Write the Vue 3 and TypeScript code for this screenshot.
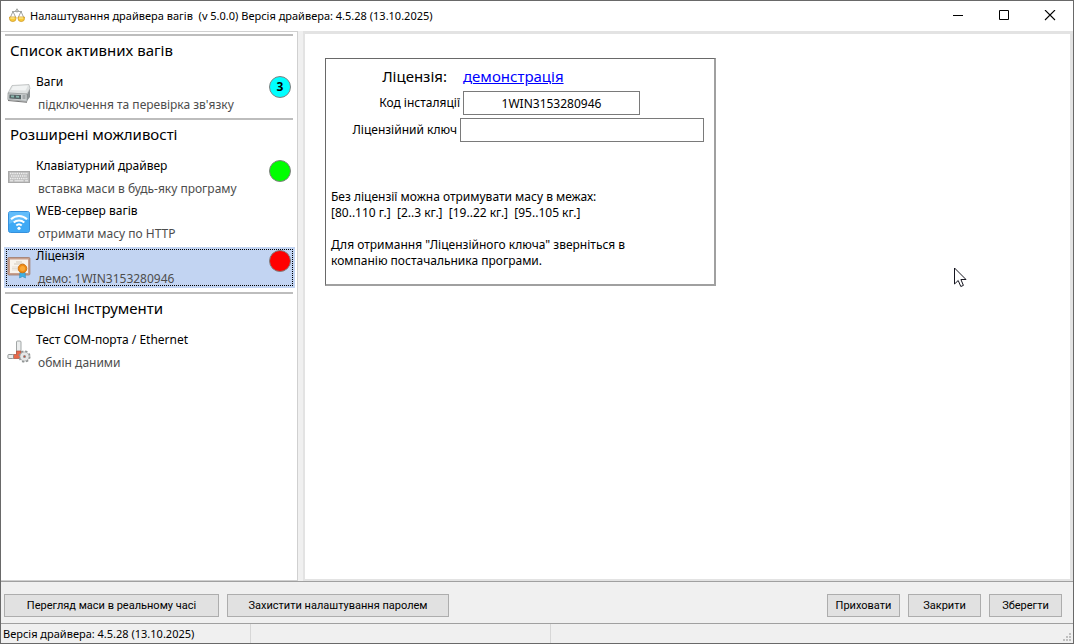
<script setup lang="ts">
import { ref } from 'vue'

interface Item {
  id: string
  title: string
  note: string
  badge?: string
  color?: string
}
interface Group {
  title: string
  items: Item[]
}

const driverVersion = 'Версія драйвера: 4.5.28 (13.10.2025)'
const installCode = ref('1WIN3153280946')
const licenseKey = ref('')
const selected = ref('license')

const groups: Group[] = [
  {
    title: 'Список активних вагів',
    items: [{ id: 'scales', title: 'Ваги', note: "підключення та перевірка зв'язку", badge: '3', color: 'cyan' }],
  },
  {
    title: 'Розширені можливості',
    items: [
      { id: 'keyboard', title: 'Клавіатурний драйвер', note: 'вставка маси в будь-яку програму', badge: '', color: 'lime' },
      { id: 'web', title: 'WEB-сервер вагів', note: 'отримати масу по HTTP' },
      { id: 'license', title: 'Ліцензія', note: 'демо: 1WIN3153280946', badge: '', color: 'red' },
    ],
  },
  {
    title: 'Сервісні Інструменти',
    items: [{ id: 'test', title: 'Тест COM-порта / Ethernet', note: 'обмін даними' }],
  },
]
</script>

<template>
  <div class="window">
    <header class="titlebar">
      <svg class="app-icon" width="16" height="16" viewBox="0 0 16 16">
        <path d="M8 .5v4M3 3.500h10M4 3.500L1.500 9M4 3.500L6.500 9M12 3.500L9.500 9M12 3.500L14.500 9M6 3.500l2-2.500 2 2.500" fill="none" stroke="#a3a6a2" />
        <path d="M.5 9h6.500v1.500a3.200 3 0 0 1-6.500 0zM9 9h6.500v1.500a3.200 3 0 0 1-6.500 0z" fill="#f9ca38" stroke="#cf9a2c" stroke-width=".8" />
        <path d="M1.500 10h4M10 10h4" stroke="#fff2a8" />
      </svg>
      <h1>Налаштування драйвера вагів&nbsp; (v 5.0.0) {{ driverVersion }}</h1>
      <div class="window-buttons">
        <button type="button" aria-label="Згорнути">
          <svg width="12" height="12" viewBox="0 0 12 12"><path d="M1 5.500h10" stroke="#000" /></svg>
        </button>
        <button type="button" aria-label="Розгорнути">
          <svg width="12" height="12" viewBox="0 0 12 12"><path d="M1.500 .5h9v9h-9z" fill="none" stroke="#000" /></svg>
        </button>
        <button type="button" aria-label="Закрити вікно">
          <svg width="12" height="12" viewBox="0 0 12 12"><path d="M1 0l10 10M11 0L1 10" stroke="#000" stroke-width="1.100" /></svg>
        </button>
      </div>
    </header>

    <div class="body">
      <nav class="sidebar">
        <section v-for="group in groups" :key="group.title" class="group">
          <h2>{{ group.title }}</h2>
          <button
            v-for="item in group.items"
            :key="item.id"
            type="button"
            class="item"
            :class="{ active: selected === item.id }"
            @click="selected = item.id"
          >
            <svg class="item-icon" width="24" height="24" viewBox="0 0 24 24">
              <g v-if="item.id === 'scales'">
                <path d="M20 13l3-6v9l-3 4z" fill="#8b9092" />
                <path d="M5 4.500l17-1 1 4-3 5.500L1 12z" fill="#dfe2e2" stroke="#a9adad" stroke-width=".6" />
                <path d="M6 5.200l15-.8-2.500 5L4 9z" fill="#f1f3f3" />
                <path d="M1 12l19 1v7.500L.8 18.500z" fill="#ccd0d1" stroke="#85898a" stroke-width=".6" />
                <path d="M2.500 13.500l11.500.6v4.200l-11.700-.8z" fill="#566466" />
                <path d="M4 14.500l3 .1v1.800l-3-.1zM9 14.800l3 .1v1.800l-3-.1z" fill="#86b5ac" />
                <path d="M15.500 15h3M15.500 17h3" stroke="#7b8082" />
                <path d="M1 19.500l19 1.800" stroke="#777" />
              </g>
              <g v-else-if="item.id === 'keyboard'">
                <rect x="1.500" y="6.500" width="21" height="11" fill="#bcbcbc" stroke="#a9a9a9" />
                <path d="M3 8.500h18M3 13.500h18" stroke="#f0f0f0" stroke-width="1.400" stroke-dasharray="1.400 .8" />
                <path d="M4 11h16" stroke="#f0f0f0" stroke-width="1.400" stroke-dasharray="1.400 .8" />
                <path d="M3 15.800h3M7.500 15.800h9M18 15.800h3" stroke="#f0f0f0" />
              </g>
              <g v-else-if="item.id === 'web'">
                <rect x="1.500" y="1.500" width="21" height="21" rx="2" fill="#3fa9f5" stroke="#3590dc" />
                <path d="M2 2h20v8Q12 9 2 14z" fill="#62bdfb" />
                <path d="M4 9.300a11.500 11.500 0 0 1 16 0M6.700 12.500a7.700 7.700 0 0 1 10.600 0M9.300 15.500a4 4 0 0 1 5.400 0" fill="none" stroke="#fff" stroke-width="2" />
                <circle cx="12" cy="18.300" r="1.600" fill="#fff" />
              </g>
              <g v-else-if="item.id === 'license'">
                <rect x=".9" y="2.500" width="22" height="17.500" rx="1" fill="#c9a08d" stroke="#a07a69" stroke-width=".8" />
                <rect x="3" y="4.500" width="18" height="13.500" fill="#f8f4ee" />
                <path d="M9 7h6M7 9h10" stroke="#c4b8a8" stroke-width=".7" />
                <path d="M5 12h6M5 13.500h5M5 15h6" stroke="#d6cec4" stroke-width=".6" />
                <path d="M13 16.500l-.5 6.500 3-1.500 3 1.500-.5-6.500z" fill="#3fb0e4" stroke="#2585b5" stroke-width=".5" />
                <circle cx="15.500" cy="13.500" r="4.300" fill="#f08c14" stroke="#cf7412" />
                <circle cx="15.500" cy="13.500" r="2.500" fill="#fbaa38" />
              </g>
              <g v-else>
                <rect x="9.500" y="2" width="4.500" height="13" rx="1" fill="#eceeee" stroke="#8d9292" stroke-width=".8" />
                <path d="M9.500 12h4.500v7.500H6.500V15.500h3z" fill="#e8694a" stroke="#a8503c" stroke-width=".7" />
                <rect x=".9" y="15.500" width="5.600" height="4" rx="1" fill="#eceeee" stroke="#7b8080" stroke-width=".8" />
                <circle cx="17.500" cy="17.500" r="5" fill="none" stroke="#8f9393" stroke-width="2.200" stroke-dasharray="2.200 1.728" />
                <circle cx="17.500" cy="17.500" r="4.600" fill="#e6e7e7" stroke="#9b9f9f" stroke-width=".7" />
                <circle cx="17.500" cy="17.500" r="1.500" fill="#8d9191" />
                <circle cx="17.500" cy="17.500" r=".7" fill="#d34a36" />
              </g>
            </svg>
            <span class="item-text">
              <span class="item-title">{{ item.title }}</span>
              <span class="item-note">{{ item.note }}</span>
            </span>
            <span v-if="item.color" class="badge" :class="item.color">{{ item.badge }}</span>
          </button>
        </section>
      </nav>

      <main class="content">
        <form class="license-box" @submit.prevent>
          <div class="field status-field">
            <span class="label">Ліцензія:</span>
            <a href="#">демонстрація</a>
          </div>
          <div class="field code-field">
            <label for="install-code">Код інсталяції</label>
            <input id="install-code" v-model="installCode" type="text" readonly />
          </div>
          <div class="field key-field">
            <label for="license-key">Ліцензійний ключ</label>
            <input id="license-key" v-model="licenseKey" type="text" />
          </div>
          <p>
            Без ліцензії можна отримувати масу в межах:<br />
            [80..110 г.]&nbsp; [2..3 кг.]&nbsp; [19..22 кг.]&nbsp; [95..105 кг.]
          </p>
          <p>
            Для отримання "Ліцензійного ключа" зверніться в<br />
            компанію постачальника програми.
          </p>
        </form>
      </main>
    </div>

    <div class="actions">
      <button type="button" class="preview">Перегляд маси в реальному часі</button>
      <button type="button" class="protect">Захистити налаштування паролем</button>
      <span class="spacer"></span>
      <button type="button" class="short">Приховати</button>
      <button type="button" class="short">Закрити</button>
      <button type="button" class="short">Зберегти</button>
    </div>

    <footer class="statusbar">
      <span class="panel first">{{ driverVersion }}</span>
      <span class="panel second"></span>
      <svg class="grip" width="10" height="10" viewBox="0 0 10 10">
        <path d="M6 0h2v2H6zM3 3h2v2H3zM6 3h2v2H6zM0 6h2v2H0zM3 6h2v2H3zM6 6h2v2H6z" fill="#bfbfbf" />
      </svg>
    </footer>

    <svg class="pointer" width="13" height="21" viewBox="0 0 13 21">
      <path d="M.5 1v16l3.700-3.500 2.600 6 2.600-1.100-2.500-5.900H12z" fill="#fff" stroke="#15151f" />
    </svg>
  </div>
</template>

<style>
body {
  margin: 0;
}
</style>

<style scoped>
* {
  box-sizing: border-box;
}
.window {
  position: relative;
  display: flex;
  flex-direction: column;
  min-height: 100vh;
  border: 1px solid #696969;
  background: #f0f0f0;
  color: #000;
  font: 12px/16px "Noto Sans", "Open Sans", sans-serif;
}
button,
input {
  font: inherit;
  color: inherit;
  border-radius: 0;
}
.titlebar {
  display: flex;
  align-items: center;
  height: 30px;
  padding-left: 8px;
  background: #fff;
}
h1 {
  flex: 1;
  margin: 0 0 0 5px;
  font: 11px/16px "Noto Sans", "Open Sans", sans-serif;
}
.window-buttons {
  display: flex;
}
.window-buttons button {
  display: grid;
  place-items: center;
  width: 46px;
  height: 28px;
  padding: 0;
  border: 0;
  background: none;
}
.body {
  display: flex;
  flex: 1;
}
.sidebar {
  width: 297px;
  padding: 2px 2px 0 3px;
  border: 1px solid #d0d0d0;
  border-left: 0;
  background: #fff;
}
.group {
  display: flex;
  flex-direction: column;
}
h2 {
  height: 39px;
  margin: 0 2px 0 1px;
  padding: 3px 5px 0;
  border-top: 2px solid #bdbdbd;
  font: 15px/22px "Noto Sans", "Open Sans", sans-serif;
}
.item {
  display: flex;
  align-items: flex-start;
  height: 41px;
  margin-bottom: 4px;
  padding: 0 4px 0 3px;
  border: 0;
  background: none;
  text-align: left;
}
.item.active {
  background: #c2d4f2;
  outline: 1px dotted #000;
  outline-offset: -3px;
}
.item-icon {
  flex: none;
  margin-top: 8px;
}
.item-text {
  display: flex;
  flex: 1;
  flex-direction: column;
  gap: 7px;
  padding: 1px 0 0 5px;
  white-space: nowrap;
}
.item-note {
  padding-left: 2px;
  color: #4d4d4d;
}
.badge {
  width: 22px;
  height: 22px;
  margin-top: 3px;
  border: 1px solid #808080;
  border-radius: 50%;
  font-weight: bold;
  line-height: 20px;
  text-align: center;
}
.cyan {
  background: #00ffff;
}
.lime {
  background: #00ff00;
}
.red {
  background: #ff0000;
}
.content {
  flex: 1;
  margin-left: 5px;
  padding: 24px 20px;
  border: 2px solid #e3e3e3;
  border-width: 3px 3px 2px 2px;
  background: #fff;
}
.license-box {
  width: 391px;
  height: 228px;
  padding: 5px;
  border: 2px solid #a0a0a0;
  border-top: 1px solid #696969;
  border-left: 1px solid #696969;
}
.field {
  display: flex;
  align-items: center;
  gap: 3px;
  height: 24px;
  margin-bottom: 3px;
  text-align: right;
}
.status-field {
  gap: 16px;
  font-size: 15px;
}
.status-field .label {
  width: 116px;
}
.code-field label {
  width: 129px;
}
.key-field label {
  width: 126px;
}
label {
  white-space: nowrap;
}
a {
  color: #0000ff;
}
input {
  height: 24px;
  padding: 0 4px;
  border: 1px solid #7a7a7a;
  background: #fff;
  text-align: center;
}
.code-field input {
  width: 177px;
}
.key-field input {
  width: 244px;
}
p {
  margin: 0 0 16px;
  white-space: nowrap;
}
.key-field {
  margin-bottom: 47px;
}
.actions {
  display: flex;
  align-items: center;
  gap: 8px;
  height: 42px;
  padding: 6px 11px 0 3px;
  border-top: 1px solid #a0a0a0;
}
.actions button {
  height: 23px;
  padding: 1px 0 0;
  border: 1px solid #adadad;
  background: #e1e1e1;
  font: 11px/16px Roboto, "Noto Sans", sans-serif;
}
.preview {
  width: 215px;
}
.protect {
  width: 222px;
}
.short {
  width: 73px;
}
.spacer {
  flex: 1;
}
.statusbar {
  display: flex;
  height: 20px;
  border-top: 1px solid #a0a0a0;
  font: 11px/20px "Noto Sans", "Open Sans", sans-serif;
}
.panel {
  border-right: 1px solid #d7d7d7;
  white-space: nowrap;
}
.first {
  width: 250px;
  padding-left: 2px;
}
.second {
  width: 300px;
}
.grip {
  align-self: flex-end;
  margin-left: auto;
}
.pointer {
  position: absolute;
  left: 953px;
  top: 266px;
}
</style>
